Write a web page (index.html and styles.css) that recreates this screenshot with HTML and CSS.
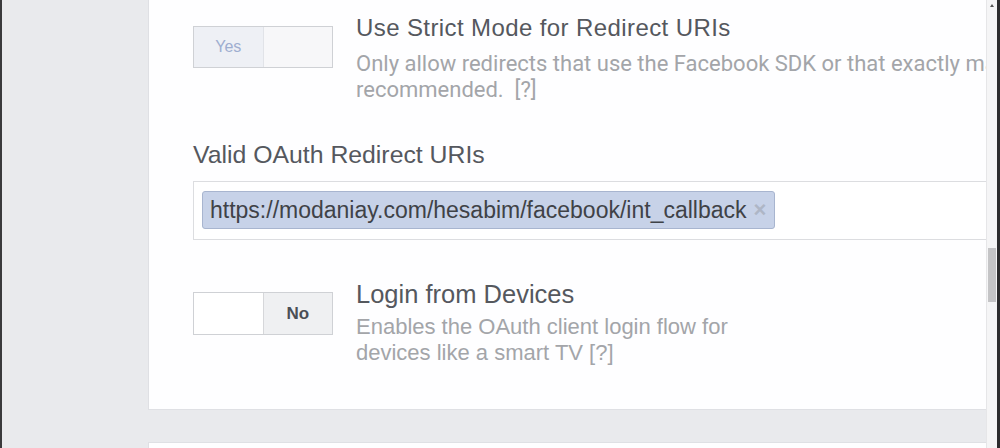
FILE: index.html
```html
<!DOCTYPE html>
<html>
<head>
<meta charset="utf-8">
<link rel="stylesheet" href="styles.css">
</head>
<body>
<div class="frame">
  <div class="viewport">
    <div class="page">
      <section class="card card-top">
        <div class="setting">
          <div class="toggle toggle-on">
            <span class="half half-yes">Yes</span>
            <span class="half half-blank"></span>
          </div>
          <div class="setting-text">
            <div class="setting-title title-narrow">Use Strict Mode for Redirect URIs</div>
            <div class="setting-desc desc-narrow">Only allow redirects that use the Facebook SDK or that exactly match the Valid OAuth Redirect URIs. Strongly<br>recommended.&nbsp; [?]</div>
          </div>
        </div>

        <div class="field">
          <div class="field-label">Valid OAuth Redirect URIs</div>
          <div class="token-input">
            <span class="token">https://modaniay.com/hesabim/facebook/int_callback<span class="token-x">×</span></span>
          </div>
        </div>

        <div class="setting setting-last">
          <div class="toggle toggle-off">
            <span class="half half-blank-white"></span>
            <span class="half half-no">No</span>
          </div>
          <div class="setting-text">
            <div class="setting-title">Login from Devices</div>
            <div class="setting-desc">Enables the OAuth client login flow for<br>devices like a smart TV [?]</div>
          </div>
        </div>
      </section>
      <section class="card card-next"></section>
    </div>
  </div>
  <div class="scrollbar">
    <div class="arrow-up"></div>
    <div class="thumb"></div>
  </div>
</div>
</body>
</html>
```
FILE: styles.css
```css
html, body {
  margin: 0;
  padding: 0;
  height: 448px;
  overflow: hidden;
  background: #e9eaed;
}

.frame {
  display: flex;
  height: 448px;
  border-left: 2px solid #3a3a3c;
  border-right: 3px solid #2c2c2e;
  box-sizing: border-box;
}

.viewport {
  flex: 1;
  overflow: hidden;
  background: #e9eaed;
}

.page {
  padding-left: 146px;
  width: 900px;
}

.card {
  background: #fefeff;
  border-left: 1px solid #dfe0e4;
  box-sizing: border-box;
}

.card-top {
  height: 410px;
  padding: 26px 0 0 44px;
  border-bottom: 1px solid #dfe0e4;
}

.card-next {
  margin-top: 32px;
  height: 40px;
  border-top: 1px solid #dfe0e4;
}

.setting {
  display: flex;
  gap: 23px;
}

.toggle {
  display: flex;
  width: 140px;
  height: 42px;
  border: 1px solid #cfd1d5;
  box-sizing: border-box;
  flex-shrink: 0;
}

.toggle-off {
  height: 43px;
}

.half {
  flex: 1;
  display: flex;
  align-items: center;
  justify-content: center;
  font-family: "Liberation Sans", Arial, sans-serif;
}

.half-yes {
  background: #eef0f5;
  color: #9eaed0;
  font-size: 16px;
  border-right: 1px solid #e1e3e8;
}

.half-blank {
  background: #f7f7f9;
}

.half-blank-white {
  background: #ffffff;
  border-right: 1px solid #d6d7da;
}

.half-no {
  background: #eff0f2;
  color: #4b4f56;
  font-weight: bold;
  font-size: 17px;
}

.setting-text {
  margin-top: -12px;
  white-space: nowrap;
}

.setting-title {
  font-family: "Liberation Sans", Arial, sans-serif;
  font-size: 25.5px;
  line-height: 28px;
  color: #55585e;
}

.title-narrow {
  font-size: 24px;
  letter-spacing: 0.4px;
  line-height: 26px;
  padding-top: 1px;
}

.setting-desc {
  margin-top: 6px;
  font-family: "Liberation Sans", Arial, sans-serif;
  font-size: 22px;
  line-height: 26px;
  color: #a3a5a9;
}

.desc-narrow {
  margin-top: 10px;
  font-family: Roboto, "Liberation Sans", sans-serif;
  font-size: 22px;
}

.field {
  margin-top: 38px;
}

.field-label {
  font-family: "Liberation Sans", Arial, sans-serif;
  font-size: 24.8px;
  line-height: 28px;
  color: #55585e;
}

.token-input {
  margin-top: 12px;
  height: 59px;
  border: 1px solid #dcdde0;
  box-sizing: border-box;
  padding: 9px 0 0 8px;
  background: #ffffff;
}

.token {
  display: inline-flex;
  align-items: center;
  height: 38px;
  box-sizing: border-box;
  padding: 0 8px 0 7px;
  background: #c7d2e8;
  border: 1px solid #a8b5cf;
  border-radius: 3px;
  font-family: "Liberation Sans", Arial, sans-serif;
  font-size: 23px;
  color: #3f4247;
}

.token-x {
  margin-left: 7px;
  color: #aeb6c6;
  font-size: 22px;
  font-weight: bold;
}

.setting-last {
  margin-top: 52px;
}

.scrollbar {
  position: relative;
  width: 10px;
  background: #f5f5f6;
  border-left: 1px solid #e6e6e8;
}

.arrow-up {
  position: absolute;
  top: 4px;
  left: 3px;
  width: 0;
  height: 0;
  border-left: 2px solid transparent;
  border-right: 2px solid transparent;
  border-bottom: 3px solid #555;
}

.thumb {
  position: absolute;
  top: 248px;
  left: 1px;
  width: 8px;
  height: 54px;
  background: #c4c4c6;
}
```
